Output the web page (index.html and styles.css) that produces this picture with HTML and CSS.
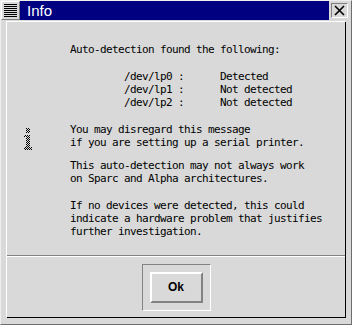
FILE: index.html
```html
<!DOCTYPE html>
<html lang="en">
<head>
    <meta charset="UTF-8">
    <title>Info</title>
    <link rel="stylesheet" href="styles.css">
</head>
<body>
<div class="window">
  <!-- title bar -->
  <div class="titlebar">
    <span class="menu-btn"><span class="lines"></span></span>
    <div class="title">Info</div>
    <span class="close-btn">
      <span class="x">
        <svg width="11" height="11" viewBox="0 0 11 11">
          <path d="M1 1 L10 10 M10 1 L1 10" stroke="#000" stroke-width="1.6" fill="none"/>
        </svg>
      </span>
    </span>
  </div>
  <div class="frame">
    <div class="client">
      <div class="message">
        <div class="icon">
          <svg width="8" height="22" viewBox="0 0 8 22">
            <defs>
              <pattern id="dots" width="2" height="2" patternUnits="userSpaceOnUse">
                <rect x="0" y="0" width="1" height="1" fill="#000"/>
                <rect x="1" y="1" width="1" height="1" fill="#000"/>
              </pattern>
            </defs>
            <rect x="2" y="0" width="4" height="5" fill="url(#dots)"/>
            <rect x="0" y="7" width="6" height="2" fill="url(#dots)"/>
            <rect x="2" y="9" width="4" height="10" fill="url(#dots)"/>
            <rect x="0" y="19" width="8" height="3" fill="url(#dots)"/>
          </svg>
        </div>
        <div class="text">
          <p>Auto-detection found the following:</p>
          <p class="devices">         /dev/lp0 :      Detected
         /dev/lp1 :      Not detected
         /dev/lp2 :      Not detected</p>
          <p class="tight">You may disregard this message<br>if you are setting up a serial printer.</p>
          <p>This auto-detection may not always work<br>on Sparc and Alpha architectures.</p>
          <p>If no devices were detected, this could<br>indicate a hardware problem that justifies<br>further investigation.</p>
        </div>
      </div>
      <!-- button row -->
      <div class="buttons">
        <div class="default-ring">
          <span class="btn">Ok</span>
        </div>
      </div>
    </div>
  </div>
</div>
</body>
</html>
```

FILE: styles.css
```css
body {
margin:0;
padding:0;
background:#d9d9d9;
}

.window {
width:352px;
height:325px;
display:flex;
flex-direction:column;
box-sizing:border-box;
border-left:1px solid #eeeeee;
border-top:1px solid #eeeeee;
border-right:1px solid #6e6e6e;
border-bottom:1px solid #6e6e6e;
}

/* title bar */
.titlebar {
height:19px;
display:flex;
}
.menu-btn {
width:19px;
height:19px;
box-sizing:border-box;
border-left:1px solid #fff;
border-top:1px solid #fff;
border-right:1px solid #808080;
border-bottom:1px solid #808080;
display:flex;
align-items:center;
justify-content:center;
}
.menu-btn .lines {
width:13px;
height:13px;
background:repeating-linear-gradient(#000 0 1px, transparent 1px 2px);
}
.title {
flex:1;
background:#000080;
color:#fff;
font:15px "Liberation Sans", Arial, sans-serif;
line-height:19px;
padding-left:7px;
}
.close-btn {
width:22px;
height:19px;
box-sizing:border-box;
padding:2px 3px 2px 2px;
}
.close-btn .x {
height:100%;
box-sizing:border-box;
border-left:1px solid #808080;
border-top:1px solid #808080;
border-right:1px solid #fff;
border-bottom:1px solid #fff;
display:flex;
align-items:center;
justify-content:center;
}

/* frame round the client */
.frame {
flex:1;
padding:2px 5px 6px 6px;
display:flex;
}
.client {
flex:1;
display:flex;
flex-direction:column;
border-right:1px solid #000;
border-bottom:1px solid #000;
box-shadow:-1px -1px 0 #fff;
}

/* message area */
.message {
flex:1;
display:flex;
align-items:center;
border-bottom:1px solid #828282;
}
.icon {
width:63px;
padding-left:17px;
box-sizing:border-box;
display:flex;
}
.text {
padding-top:3px;
font:11px "DejaVu Sans Mono", monospace;
letter-spacing:-0.62px;
line-height:13px;
color:#000;
}
.text p {
margin:0 0 14px;
white-space:nowrap;
}
.text p.tight {
margin-bottom:10px;
}
.text p:last-child {
margin-bottom:0;
}
.text p.devices {
white-space:pre;
}

/* buttons */
.buttons {
height:60px;
border-top:1px solid #fff;
display:flex;
align-items:center;
justify-content:center;
}
.default-ring {
width:69px;
height:47px;
box-sizing:border-box;
border-left:1px solid #828282;
border-top:1px solid #828282;
border-right:1px solid #fff;
border-bottom:1px solid #fff;
display:flex;
align-items:center;
justify-content:center;
}
.btn {
width:53px;
height:31px;
box-sizing:border-box;
border-left:2px solid #fff;
border-top:2px solid #fff;
border-right:2px solid #828282;
border-bottom:2px solid #828282;
font:bold 12px "Liberation Sans", Arial, sans-serif;
display:flex;
align-items:center;
justify-content:center;
}
```
